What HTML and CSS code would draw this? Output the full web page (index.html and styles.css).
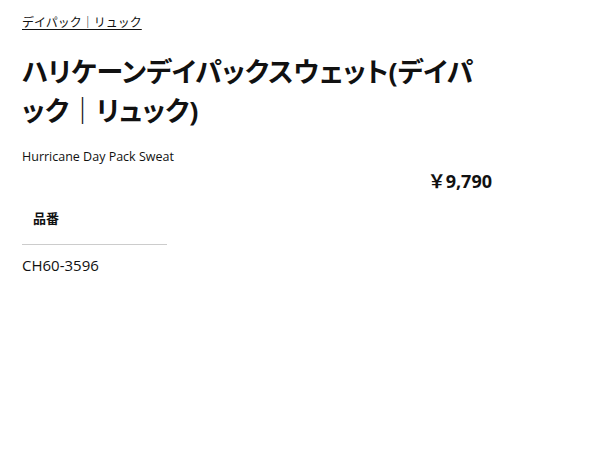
FILE: index.html
```html
<!DOCTYPE html>
<html lang="ja">
<head>
<meta charset="utf-8">
<link rel="stylesheet" href="styles.css">
</head>
<body>
<div class="page">
  <a class="crumb" href="#">デイパック｜リュック</a>
  <h1 class="title">ハリケーンデイパックスウェット(デイパック｜リュック)</h1>
  <p class="sub">Hurricane Day Pack Sweat</p>
  <div class="price">￥9,790</div>
  <div class="spec">
    <div class="spec-label">品番</div>
    <div class="spec-value">CH60-3596</div>
  </div>
</div>
</body>
</html>
```

FILE: styles.css
```css
html, body { margin: 0; padding: 0; background: #fff; }
body {
  font-family: "Open Sans", "Noto Sans CJK JP", sans-serif;
  color: #111;
}
.page {
  width: 470px;
  padding: 14px 0 0 22px;
}
.crumb {
  display: block;
  font-size: 12px;
  line-height: 18px;
  color: #111;
  text-decoration: underline;
  text-underline-offset: 2px;
}
.title {
  font-size: 27px;
  font-weight: 700;
  line-height: 39px;
  margin: 20px 0 0 0;
  line-break: loose;
  font-feature-settings: "palt";
}
.sub {
  font-size: 12.5px;
  line-height: 18px;
  margin: 18px 0 0 0;
}
.price {
  text-align: right;
  font-size: 18px;
  font-weight: 700;
  line-height: 24px;
  margin-top: 3px;
}
.spec { margin-top: 15px; }
.spec-label {
  font-size: 13px;
  font-weight: 700;
  line-height: 20px;
  padding: 0 0 16px 11px;
  width: 134px;
  border-bottom: 1px solid #ccc;
}
.spec-value {
  font-size: 15px;
  line-height: 20px;
  padding-top: 10px;
}
```
